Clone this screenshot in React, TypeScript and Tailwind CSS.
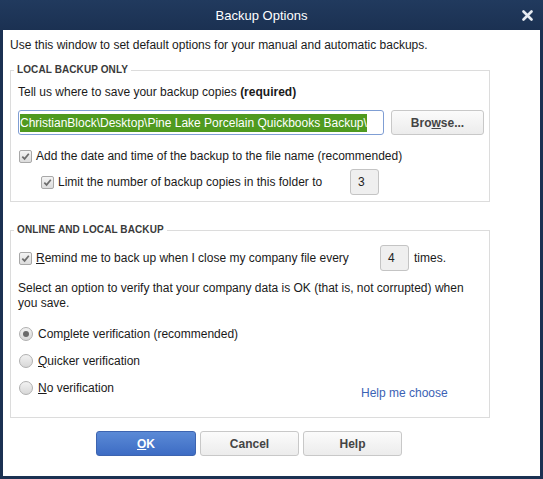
import React from "react";

const font = { fontFamily: '"Liberation Sans", Arial, sans-serif' };

function Check({ checked = true }: { checked?: boolean }) {
  return (
    <span className="inline-flex h-[13px] w-[13px] shrink-0 items-center justify-center rounded-[2px] border border-[#a8a8a8] bg-gradient-to-b from-[#f4f4f4] to-[#dcdcdc]">
      {checked && (
        <svg width="9" height="9" viewBox="0 0 9 9">
          <path d="M1.3 4.6 L3.6 6.9 L7.8 1.8" fill="none" stroke="#6d6d6d" strokeWidth="1.7" />
        </svg>
      )}
    </span>
  );
}

function Radio({ checked = false }: { checked?: boolean }) {
  return (
    <span className="inline-flex h-[14px] w-[14px] shrink-0 items-center justify-center rounded-full border border-[#b0b0b0] bg-gradient-to-b from-[#f2f2f2] to-[#d8d8d8]">
      {checked && <span className="h-[6px] w-[6px] rounded-full bg-[#6a6a6a]" />}
    </span>
  );
}

function NumBox({ v }: { v: string }) {
  return (
    <div className="flex h-[26px] w-[29px] shrink-0 items-center rounded-[3px] border border-[#c4c4c4] bg-[#efefef] pl-[7px] text-[12px] text-[#222]">
      {v}
    </div>
  );
}

export default function App() {
  return (
    <div className="flex h-[479px] w-[543px] flex-col bg-[#1b3152] text-[12px] text-[#1a1a1a]" style={font}>
      <div className="relative flex h-[30px] shrink-0 items-center justify-center bg-gradient-to-b from-[#213a5e] to-[#1b3152] pr-[20px]">
        <span className="pt-[1px] text-[13px] text-white">Backup Options</span>
        <svg className="absolute right-[10px] top-[10px]" width="11" height="11" viewBox="0 0 11 11">
          <path d="M1.5 1.5 L9.5 9.5 M9.5 1.5 L1.5 9.5" stroke="#e8ecf2" strokeWidth="2.6" strokeLinecap="round" />
        </svg>
      </div>
      <div className="mx-[3px] mb-[3px] flex flex-1 flex-col bg-white pl-[7px]">
        <div className="mt-[7px] leading-[16px]">Use this window to set default options for your manual and automatic backups.</div>

        <div className="relative mt-[17px] h-[132px] w-[480px] border border-[#dcdcdc]">
          <span className="absolute left-[3px] top-[-8px] bg-white px-[3px] text-[10px] font-bold leading-[14px] tracking-[0.1px] text-[#3a3a3a]">
            LOCAL BACKUP ONLY
          </span>
          <div className="ml-[7px] mt-[13px] leading-[16px]">
            Tell us where to save your backup copies <b>(required)</b>
          </div>
          <div className="ml-[7px] mt-[10px] flex items-center gap-[7px]">
            <div className="flex h-[25px] w-[366px] items-center overflow-hidden rounded-[3px] border border-[#7f9ed4] bg-white px-[1px]">
              <span className="whitespace-nowrap bg-[#4f9a1f] text-[12px] leading-[18px] text-white">
                ChristianBlock\Desktop\Pine Lake Porcelain Quickbooks Backup\
              </span>
            </div>
            <button className="flex h-[25px] w-[93px] items-center justify-center rounded-[3px] border border-[#c8c8c8] bg-gradient-to-b from-[#fbfbfb] to-[#ececec] text-[12px] font-bold text-[#444]">
              Bro<span className="underline">w</span>se...
            </button>
          </div>
          <div className="ml-[8px] mt-[13px] flex items-center gap-[4px] leading-[16px]">
            <Check />
            <span>Add the date and time of the backup to the file name (recommended)</span>
          </div>
          <div className="ml-[30px] mt-[5px] flex items-center">
            <Check />
            <span className="ml-[4px] w-[292px] leading-[16px]">Limit the number of backup copies in this folder to</span>
            <NumBox v="3" />
          </div>
        </div>

        <div className="relative mt-[28px] h-[188px] w-[480px] border border-[#dcdcdc]">
          <span className="absolute left-[3px] top-[-8px] bg-white px-[3px] text-[10px] font-bold leading-[14px] tracking-[0.1px] text-[#3a3a3a]">
            ONLINE AND LOCAL BACKUP
          </span>
          <div className="ml-[8px] mt-[14px] flex items-center">
            <Check />
            <span className="ml-[4px] w-[344px] leading-[16px]">
              <span className="underline">R</span>emind me to back up when I close my company file every
            </span>
            <NumBox v="4" />
            <span className="ml-[5px]">times.</span>
          </div>
          <div className="ml-[7px] mt-[10px] w-[458px] leading-[15px]">
            Select an option to verify that your company data is OK (that is, not corrupted) when you save.
          </div>
          <div className="ml-[8px] mt-[15px] flex items-center gap-[5px] leading-[16px]">
            <Radio checked />
            <span>
              Com<span className="underline">p</span>lete verification (recommended)
            </span>
          </div>
          <div className="ml-[8px] mt-[11px] flex items-center gap-[5px] leading-[16px]">
            <Radio />
            <span>
              <span className="underline">Q</span>uicker verification
            </span>
          </div>
          <div className="ml-[8px] mt-[11px] flex items-center leading-[16px]">
            <Radio />
            <span className="ml-[5px] w-[323px]">
              <span className="underline">N</span>o verification
            </span>
            <span className="relative top-[5px] text-[#3b62b4]">Help me choose</span>
          </div>
        </div>

        <div className="ml-[86px] mt-[13px] flex gap-[4px]">
          <button className="flex h-[25px] w-[100px] items-center justify-center rounded-[3px] border border-[#3d64b0] bg-gradient-to-b from-[#5b8ad6] to-[#3d6cc4] text-[12px] font-bold text-white">
            <span className="underline">O</span>K
          </button>
          <button className="flex h-[25px] w-[99px] items-center justify-center rounded-[3px] border border-[#c8c8c8] bg-gradient-to-b from-[#fbfbfb] to-[#ececec] text-[12px] font-bold text-[#444]">
            Cancel
          </button>
          <button className="flex h-[25px] w-[99px] items-center justify-center rounded-[3px] border border-[#c8c8c8] bg-gradient-to-b from-[#fbfbfb] to-[#ececec] text-[12px] font-bold text-[#444]">
            Help
          </button>
        </div>
      </div>
    </div>
  );
}
